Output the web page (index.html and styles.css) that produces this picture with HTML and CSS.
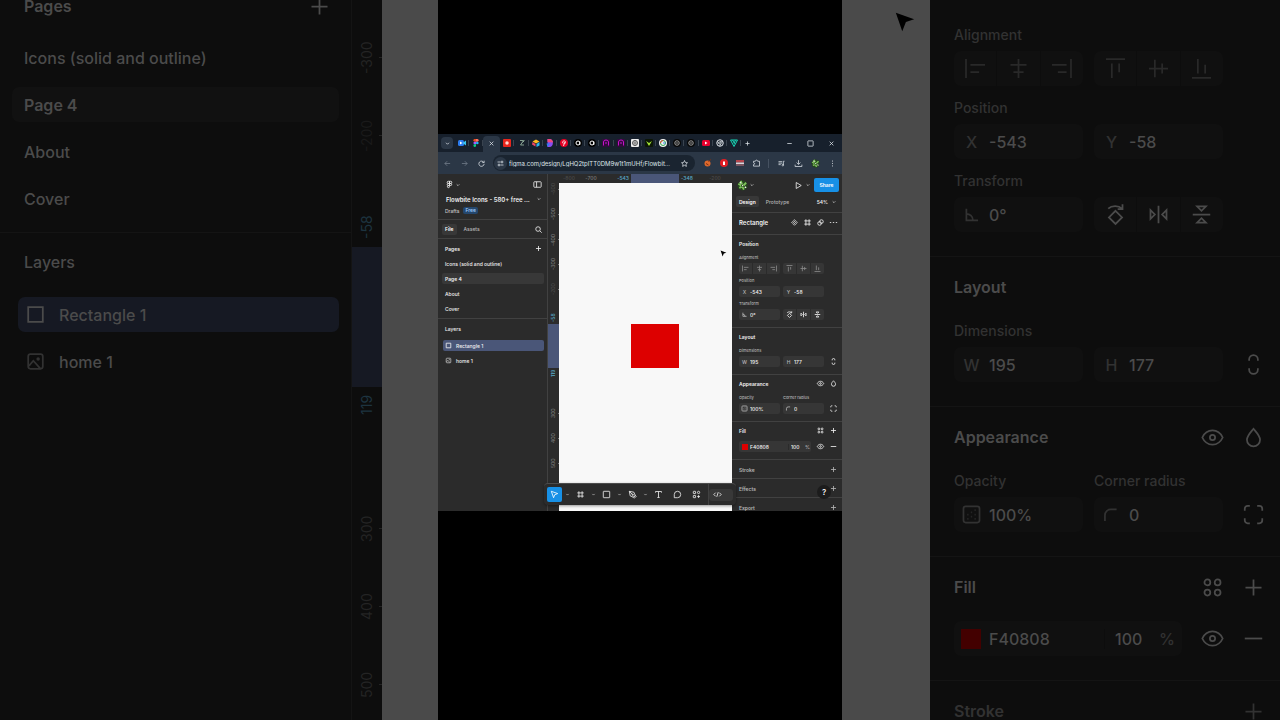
FILE: index.html
```
<!DOCTYPE html>
<html lang="en">
<head>
    <meta charset="UTF-8">
    <meta name="viewport" content="width=device-width, initial-scale=1.0">
    <title>Flowbite Icons</title>
    <link rel="stylesheet" href="styles.css">
</head>
<body>
    <!-- Icon set, 24 unit grid -->
    <svg class="sprite" aria-hidden="true">
        <symbol id="plus" viewBox="0 0 24 24"><path d="M12 6.500v11M6.500 12h11"/></symbol>
        <symbol id="minus" viewBox="0 0 24 24"><path d="M6 12h12"/></symbol>
        <symbol id="chevron" viewBox="0 0 24 24"><path d="M8 10l4 4 4-4"/></symbol>
        <symbol id="square" viewBox="0 0 24 24"><path d="M7 7h10v10H7z"/></symbol>
        <symbol id="image" viewBox="0 0 24 24"><rect x="7" y="7" width="10" height="10" rx="1.500"/><path d="M7.500 15l3-3.500 5 5.500"/><circle cx="13.800" cy="10.300" r=".6"/></symbol>
        <symbol id="al-left" viewBox="0 0 24 24"><path d="M5.500 5.500v13M8.500 9.500h10M8.500 14.500h6"/></symbol>
        <symbol id="al-hcenter" viewBox="0 0 24 24"><path d="M12 5.500v13M6.500 9.500h11M8.500 14.500h7"/></symbol>
        <symbol id="al-right" viewBox="0 0 24 24"><path d="M18.500 5.500v13M5.500 9.500h10M9.500 14.500h6"/></symbol>
        <symbol id="al-top" viewBox="0 0 24 24"><path d="M5.500 5.500h13M9.500 8.500v10M14.500 8.500v6"/></symbol>
        <symbol id="al-vcenter" viewBox="0 0 24 24"><path d="M5.500 12h13M9.500 6v12M14.500 8.500v7"/></symbol>
        <symbol id="al-bottom" viewBox="0 0 24 24"><path d="M5.500 18.500h13M9.500 5.500v10M14.500 9.500v6"/></symbol>
        <symbol id="angle" viewBox="0 0 24 24"><path d="M8.500 8v8h8M8.500 11.500a4.500 4.500 0 0 1 4.500 4.500"/></symbol>
        <symbol id="rotate" viewBox="0 0 24 24"><path d="M12 9.500l4.500 4.500-4.500 4.500L7.500 14zM7 8a6 4.500 0 0 1 9.500 0M16.800 5v3.300h-3.300"/></symbol>
        <symbol id="flip-h" viewBox="0 0 24 24"><path d="M12 6v12M6.500 9v6l3-3zM17.500 9v6l-3-3z"/></symbol>
        <symbol id="flip-v" viewBox="0 0 24 24"><path d="M6 12h12M9 6.500h6l-3 3zM9 17.500h6l-3-3z"/></symbol>
        <symbol id="link" viewBox="0 0 24 24"><path d="M9 9.500V8.500a3 3 0 0 1 6 0v1M9 14.500v1a3 3 0 0 0 6 0v-1"/></symbol>
        <symbol id="eye" viewBox="0 0 24 24"><path d="M5 12c3-6.500 11-6.500 14 0-3 6.500-11 6.500-14 0z"/><circle cx="12" cy="12" r="1.800"/></symbol>
        <symbol id="drop" viewBox="0 0 24 24"><path d="M12 6c2.500 3 4.500 5 4.500 7.500a4.500 4.500 0 0 1-9 0C7.500 11 9.500 9 12 6z"/></symbol>
        <symbol id="opacity" viewBox="0 0 24 24"><rect x="6.500" y="6.500" width="11" height="11" rx="1.500"/><path d="M14 9h1M14 12h1M14 15h1M11.500 10.500h1M11.500 13.500h1M9 12h1M9 15h1" opacity=".6"/></symbol>
        <symbol id="corner" viewBox="0 0 24 24"><path d="M7.500 16.500v-4a4 4 0 0 1 4-4h4"/></symbol>
        <symbol id="corners" viewBox="0 0 24 24"><path d="M6 9.500V8a2 2 0 0 1 2-2h1.500M14.500 6H16a2 2 0 0 1 2 2v1.500M18 14.500V16a2 2 0 0 1-2 2h-1.500M9.500 18H8a2 2 0 0 1-2-2v-1.500"/></symbol>
        <symbol id="styles" viewBox="0 0 24 24"><circle cx="8.500" cy="8.500" r="2"/><circle cx="15.500" cy="8.500" r="2"/><circle cx="8.500" cy="15.500" r="2"/><circle cx="15.500" cy="15.500" r="2"/></symbol>
        <symbol id="figma" viewBox="0 0 24 24"><path d="M12 5H9.300a2.300 2.300 0 0 0 0 4.700H12zM12 5h2.700a2.300 2.300 0 0 1 0 4.700H12zM12 9.700H9.300a2.300 2.300 0 0 0 0 4.600H12zM12 14.300H9.300A2.300 2.300 0 1 0 12 16.600z"/><circle cx="14.500" cy="12" r="2.300"/></symbol>
        <symbol id="sidebar" viewBox="0 0 24 24"><rect x="4" y="6" width="16" height="12" rx="1.500"/><path d="M10 6v12"/></symbol>
        <symbol id="search" viewBox="0 0 24 24"><circle cx="11" cy="11" r="5"/><path d="M15 15l4 4"/></symbol>
        <symbol id="play" viewBox="0 0 24 24"><path d="M7 5.500v13l11-6.500z"/></symbol>
        <symbol id="component" viewBox="0 0 24 24"><path d="M12 6l2 2-2 2-2-2zM12 14l2 2-2 2-2-2zM8 10l2 2-2 2-2-2zM16 10l2 2-2 2-2-2z"/></symbol>
        <symbol id="frame" viewBox="0 0 24 24"><path d="M8.500 5v14M15.500 5v14M5 8.500h14M5 15.500h14"/></symbol>
        <symbol id="mask" viewBox="0 0 24 24"><circle cx="10" cy="14" r="4"/><circle cx="14" cy="10" r="4"/></symbol>
        <symbol id="dots" viewBox="0 0 24 24"><path d="M4 12h3M10.500 12h3M17 12h3"/></symbol>
        <symbol id="kebab" viewBox="0 0 24 24"><path d="M12 4v3M12 10.500v3M12 17v3"/></symbol>
        <symbol id="pointer" viewBox="0 0 24 24"><path d="M5 5l5 14 2.500-6.500L19 10z"/></symbol>
        <symbol id="pen" viewBox="0 0 24 24"><path d="M5 5l10 2 3 7-4 4-7-3zM5 5l7 7M14 18l4-4 2 2-4 4z"/><circle cx="12.500" cy="12.500" r="1.500"/></symbol>
        <symbol id="text" viewBox="0 0 24 24"><path d="M5.500 8V5.500h13V8M12 5.500v13M9.500 18.500h5"/></symbol>
        <symbol id="comment" viewBox="0 0 24 24"><path d="M5 19v-7a7 7 0 1 1 7 7z"/></symbol>
        <symbol id="actions" viewBox="0 0 24 24"><rect x="5" y="5" width="5" height="5" rx="1"/><circle cx="16.500" cy="7.500" r="2.500"/><rect x="5" y="14" width="5" height="5" rx="1"/><path d="M16.500 13.500v6M13.500 16.500h6"/></symbol>
        <symbol id="code" viewBox="0 0 24 24"><path d="M8 8l-4 4 4 4M16 8l4 4-4 4M13.500 7l-3 10"/></symbol>
        <symbol id="close" viewBox="0 0 24 24"><path d="M7 7l10 10M17 7L7 17"/></symbol>
        <symbol id="maximize" viewBox="0 0 24 24"><rect x="5" y="5" width="14" height="14" rx="1"/></symbol>
        <symbol id="back" viewBox="0 0 24 24"><path d="M19 12H5M11 6l-6 6 6 6"/></symbol>
        <symbol id="forward" viewBox="0 0 24 24"><path d="M5 12h14M13 6l6 6-6 6"/></symbol>
        <symbol id="reload" viewBox="0 0 24 24"><path d="M18 9a7 7 0 1 0 1 4M19 4.500V9.500h-5"/></symbol>
        <symbol id="tune" viewBox="0 0 24 24"><path d="M4 8h8M12 16h8"/><circle cx="16" cy="8" r="2.500"/><circle cx="8" cy="16" r="2.500"/></symbol>
        <symbol id="star" viewBox="0 0 24 24"><path d="M12 4l2.400 5.400 5.600.6-4.200 3.900 1.200 5.800L12 16.800l-5 2.900 1.200-5.800L4 10l5.600-.6z"/></symbol>
        <symbol id="puzzle" viewBox="0 0 24 24"><path d="M4 6h5c0-4 6-4 6 0h5v13H4v-4c4 0 4-5 0-5z"/></symbol>
        <symbol id="playlist" viewBox="0 0 24 24"><path d="M4 7h10M4 11h10M4 15h6M17 16V6h3"/><circle cx="15.500" cy="16.500" r="2"/></symbol>
        <symbol id="download" viewBox="0 0 24 24"><path d="M12 3v11M7 9.500l5 5 5-5M3 15v5h18v-5"/></symbol>
        <symbol id="cursor" viewBox="0 0 24 24"><path d="M2 2l7 20 4-10 9-3z"/></symbol>
        <symbol id="avatar" viewBox="0 0 24 24">
            <circle cx="12" cy="12" r="11" fill="#26451f" stroke="none"/>
            <path d="M3 8l6 4M8 2l3 7M14 12l6-6M12 15l3 6M5 17l5-2" stroke="#7fc45c" stroke-width="4"/>
            <path d="M6 5l3 2M17 15l3 2M11 12h2" stroke="#eef5e6" stroke-width="3"/>
        </symbol>
    </svg>

    <div class="stage">
        <!-- Dimmed close-up, left half -->
        <section class="backdrop backdrop-left" aria-label="Layers close-up">
            <aside class="panel side-panel">
                <div class="row-title pages-title"><h2>Pages</h2><button class="icon-btn" aria-label="Add page"><svg class="icon"><use href="#plus"/></svg></button></div>
                <nav class="page-list">
                    <a href="#">Icons (solid and outline)</a>
                    <a href="#" class="current">Page 4</a>
                    <a href="#">About</a>
                    <a href="#">Cover</a>
                </nav>
                <div class="layers">
                    <h2>Layers</h2>
                    <a href="#" class="layer selected"><svg class="icon"><use href="#square"/></svg>Rectangle 1</a>
                    <a href="#" class="layer"><svg class="icon"><use href="#image"/></svg>home 1</a>
                </div>
            </aside>
            <div class="ruler-y">
                <span class="tick">-300</span>
                <span class="tick faint">-200</span>
                <span class="edge edge-start">-58</span>
                <span class="range"></span>
                <span class="edge edge-end">119</span>
                <span class="tick">300</span>
                <span class="tick">400</span>
                <span class="tick">500</span>
            </div>
            <div class="dim-canvas"></div>
        </section>

        <!-- Recorded window -->
        <main class="clip">
            <div class="browser">
                <div class="tabs">
                    <button class="tab-menu" aria-label="Search tabs"><svg class="icon"><use href="#chevron"/></svg></button>
                    <div class="tab-list">
                        <span><svg class="fav" viewBox="0 0 16 16"><rect y="2" width="12" height="12" rx="3" fill="#2b7cf0"/><path d="M9 8l7-5v10z" fill="#39c6ef"/><path d="M4 5l5 3-5 3z" fill="#fff"/></svg></span>
                        <span><svg class="fav" viewBox="0 0 16 16"><path d="M8 0H5.500a2.600 2.600 0 0 0 0 5.300H8z" fill="#f24e1e"/><path d="M8 0h2.500a2.600 2.600 0 0 1 0 5.300H8z" fill="#ff7262"/><path d="M8 5.300H5.500a2.600 2.600 0 0 0 0 5.300H8z" fill="#a259ff"/><circle cx="10.600" cy="8" r="2.600" fill="#1abcfe"/><path d="M8 10.700H5.500A2.600 2.600 0 1 0 8 13.300z" fill="#0acf83"/></svg></span>
                        <span class="active"><svg class="icon"><use href="#close"/></svg></span>
                        <span><svg class="fav" viewBox="0 0 16 16"><rect width="16" height="16" rx="2" fill="#e8261d"/><circle cx="8" cy="8" r="3.500" fill="#ffd8d2"/></svg></span>
                        <span><svg class="fav" viewBox="0 0 16 16"><path d="M4 3h7L5 12h7M9 7l4-4" fill="none" stroke="#a8c8b0" stroke-width="1.500"/></svg></span>
                        <span><svg class="fav" viewBox="0 0 16 16"><path d="M1 5l7-4 7 4-7 4z" fill="#ffb91f"/><path d="M1 6l6 4v5L0 11z" fill="#f04668"/><path d="M9 10l6-4v7l-6 3z" fill="#2bb9ef"/></svg></span>
                        <span><svg class="fav" viewBox="0 0 16 16"><path d="M3 0h4c9 0 9 16 0 16H3z" fill="#8a4cf0"/><path d="M3 0h4c5 0 7 4 7 7L3 6z" fill="#f0487f"/><path d="M1 9h7l-5 7z" fill="#2f80ed"/></svg></span>
                        <span><svg class="fav" viewBox="0 0 16 16"><circle cx="8" cy="8" r="8" fill="#e60023"/><path d="M7 14l2-8M5.500 8.500C3 3 12 2 11 7c-.5 3-3 3-3 1.500" fill="none" stroke="#fff" stroke-width="1.600"/></svg></span>
                        <span><svg class="fav" viewBox="0 0 16 16"><circle cx="8" cy="8" r="8" fill="#000"/><circle cx="8" cy="8" r="4" fill="none" stroke="#fff" stroke-width="2"/><path d="M11.500 5v7" stroke="#fff" stroke-width="2"/></svg></span>
                        <span><svg class="fav" viewBox="0 0 16 16"><circle cx="8" cy="8" r="8" fill="#000"/><circle cx="8" cy="8" r="4" fill="none" stroke="#fff" stroke-width="2"/><path d="M11.500 5v7" stroke="#fff" stroke-width="2"/></svg></span>
                        <span><svg class="fav" viewBox="0 0 16 16"><rect width="16" height="16" fill="#310b3c"/><path d="M3 13V6a5 4 0 0 1 10 0v7M6 8h4" fill="none" stroke="#c414c9" stroke-width="2"/></svg></span>
                        <span><svg class="fav" viewBox="0 0 16 16"><rect width="16" height="16" fill="#310b3c"/><path d="M3 13V6a5 4 0 0 1 10 0v7M6 8h4" fill="none" stroke="#c414c9" stroke-width="2"/></svg></span>
                        <span><svg class="fav" viewBox="0 0 16 16"><rect width="16" height="16" rx="2" fill="#eee"/><circle cx="8" cy="8" r="5" fill="none" stroke="#222" stroke-width="1.500"/><path d="M8 3v10M4 8h8" stroke="#222"/></svg></span>
                        <span><svg class="fav" viewBox="0 0 16 16"><rect width="16" height="16" rx="2" fill="#0c1606"/><path d="M2 4l6 10 6-10-6 4z" fill="#a5e635"/></svg></span>
                        <span><svg class="fav" viewBox="0 0 16 16"><circle cx="8" cy="8" r="8" fill="#f3f3f3"/><circle cx="8" cy="8" r="5" fill="none" stroke="#34a853" stroke-width="2"/><path d="M3 8a5 5 0 0 1 5-5" fill="none" stroke="#ea4335" stroke-width="2"/><path d="M8 8h5" stroke="#4285f4" stroke-width="2"/></svg></span>
                        <span><svg class="fav" viewBox="0 0 16 16"><circle cx="8" cy="8" r="8" fill="#080808"/><circle cx="8" cy="8" r="4.500" fill="none" stroke="#999" stroke-width="2"/><path d="M5 6l6 4M5 10l6-4" stroke="#999"/></svg></span>
                        <span><svg class="fav" viewBox="0 0 16 16"><circle cx="8" cy="8" r="8" fill="#080808"/><circle cx="8" cy="8" r="4.500" fill="none" stroke="#999" stroke-width="2"/><path d="M5 6l6 4M5 10l6-4" stroke="#999"/></svg></span>
                        <span><svg class="fav" viewBox="0 0 16 16"><rect y="2" width="16" height="12" rx="3" fill="#e8002d"/><path d="M6 5l5 3-5 3z" fill="#fff"/></svg></span>
                        <span><svg class="fav" viewBox="0 0 16 16"><circle cx="8" cy="8" r="6.500" fill="#17202c" stroke="#dfe4ea" stroke-width="2"/><circle cx="8" cy="8" r="2.500" fill="none" stroke="#dfe4ea" stroke-width="1.500"/><path d="M8 5.500h6M6 9.500l-3-5M10 9.500l-3 5" stroke="#dfe4ea" stroke-width="1.500"/></svg></span>
                        <span><svg class="fav" viewBox="0 0 16 16"><path d="M1 2h14L8 15zM5 2l4 7M11 2L8 9" fill="none" stroke="#18d4b5" stroke-width="2"/></svg></span>
                    </div>
                    <button class="icon-btn" aria-label="New tab"><svg class="icon"><use href="#plus"/></svg></button>
                    <div class="window-controls">
                        <button class="icon-btn" aria-label="Minimize"><svg class="icon"><use href="#minus"/></svg></button>
                        <button class="icon-btn" aria-label="Maximize"><svg class="icon"><use href="#maximize"/></svg></button>
                        <button class="icon-btn" aria-label="Close"><svg class="icon"><use href="#close"/></svg></button>
                    </div>
                </div>
                <div class="address-bar">
                    <div class="nav-buttons">
                        <button class="icon-btn off" aria-label="Back"><svg class="icon"><use href="#back"/></svg></button>
                        <button class="icon-btn off" aria-label="Forward"><svg class="icon"><use href="#forward"/></svg></button>
                        <button class="icon-btn" aria-label="Reload"><svg class="icon"><use href="#reload"/></svg></button>
                    </div>
                    <div class="url">
                        <span class="site-info"><svg class="icon"><use href="#tune"/></svg></span>
                        <input type="text" aria-label="Address" value="figma.com/design/LgHQ2tpITT0DM9w1t1mUHf/Flowbit...">
                        <svg class="icon"><use href="#star"/></svg>
                    </div>
                    <div class="extensions">
                        <svg class="fav" viewBox="0 0 16 16"><circle cx="7" cy="9" r="6" fill="#e0692b"/><path d="M9 5l5-4M4 9l5 3" stroke="#7b2f12" stroke-width="2"/></svg>
                        <svg class="fav" viewBox="0 0 16 16"><circle cx="8" cy="8" r="8" fill="#e01e24"/><path d="M6 12V5h4v7z" fill="#fff"/></svg>
                        <svg class="fav" viewBox="0 0 16 16"><path d="M0 2h16v5H0z" fill="#b4434b"/><path d="M0 7h16v3H0z" fill="#d8d9dd"/><path d="M0 10h16v4H0z" fill="#77545f"/></svg>
                        <svg class="icon"><use href="#puzzle"/></svg>
                    </div>
                    <div class="browser-tools">
                        <svg class="icon"><use href="#playlist"/></svg>
                        <svg class="icon"><use href="#download"/></svg>
                        <svg class="icon"><use href="#avatar"/></svg>
                        <svg class="icon"><use href="#kebab"/></svg>
                    </div>
                </div>
            </div>

            <div class="editor">
                <aside class="panel side-panel">
                    <header class="file-head">
                        <div class="file-menu">
                            <span class="menu"><svg class="icon"><use href="#figma"/></svg><svg class="icon caret"><use href="#chevron"/></svg></span>
                            <svg class="icon"><use href="#sidebar"/></svg>
                        </div>
                        <div class="file-name"><h1>Flowbite Icons - 580+ free ...</h1><svg class="icon caret"><use href="#chevron"/></svg></div>
                        <div class="file-meta">Drafts <span class="badge">Free</span></div>
                    </header>
                    <div class="side-tabs">
                        <button class="tab on">File</button>
                        <button class="tab">Assets</button>
                        <svg class="icon"><use href="#search"/></svg>
                    </div>
                    <div class="row-title pages-title"><h2>Pages</h2><button class="icon-btn" aria-label="Add page"><svg class="icon"><use href="#plus"/></svg></button></div>
                    <nav class="page-list">
                        <a href="#">Icons (solid and outline)</a>
                        <a href="#" class="current">Page 4</a>
                        <a href="#">About</a>
                        <a href="#">Cover</a>
                    </nav>
                    <div class="layers">
                        <h2>Layers</h2>
                        <a href="#" class="layer selected"><svg class="icon"><use href="#square"/></svg>Rectangle 1</a>
                        <a href="#" class="layer"><svg class="icon"><use href="#image"/></svg>home 1</a>
                    </div>
                </aside>

                <div class="ruler-y">
                    <span class="tick faint">-600</span>
                    <span class="tick">-500</span>
                    <span class="tick">-400</span>
                    <span class="tick">-300</span>
                    <span class="tick faint">-200</span>
                    <span class="edge edge-start">-58</span>
                    <span class="range"></span>
                    <span class="edge edge-end">119</span>
                    <span class="tick">300</span>
                    <span class="tick">400</span>
                    <span class="tick">500</span>
                </div>

                <div class="workspace">
                    <div class="ruler-x">
                        <span class="first faint">-800</span>
                        <span>-700</span>
                        <span class="edge edge-start">-543</span>
                        <span class="range"></span>
                        <span class="edge edge-end">-348</span>
                        <span class="faint">-200</span>
                    </div>
                    <div class="canvas">
                        <div class="shape"></div>
                        <svg class="cursor"><use href="#cursor"/></svg>
                    </div>
                </div>

                <aside class="panel props">
                    <div class="share-row">
                        <span class="menu"><svg class="icon"><use href="#avatar"/></svg><svg class="icon caret"><use href="#chevron"/></svg></span>
                        <span class="menu"><svg class="icon"><use href="#play"/></svg><svg class="icon caret"><use href="#chevron"/></svg></span>
                        <button class="share">Share</button>
                    </div>
                    <div class="mode-tabs">
                        <button class="tab on">Design</button>
                        <button class="tab">Prototype</button>
                        <span class="zoom">54%<svg class="icon caret"><use href="#chevron"/></svg></span>
                    </div>
                    <div class="selection">
                        <h2>Rectangle</h2>
                        <svg class="icon"><use href="#component"/></svg>
                        <svg class="icon"><use href="#frame"/></svg>
                        <svg class="icon"><use href="#mask"/></svg>
                        <svg class="icon"><use href="#dots"/></svg>
                    </div>
                    <section class="group">
                        <div class="row-title"><h2>Position</h2></div>
                        <div class="labels"><span>Alignment</span></div>
                        <div class="fields">
                            <div class="segment quiet">
                                <button aria-label="Align left"><svg class="icon"><use href="#al-left"/></svg></button>
                                <button aria-label="Align center"><svg class="icon"><use href="#al-hcenter"/></svg></button>
                                <button aria-label="Align right"><svg class="icon"><use href="#al-right"/></svg></button>
                            </div>
                            <div class="segment quiet">
                                <button aria-label="Align top"><svg class="icon"><use href="#al-top"/></svg></button>
                                <button aria-label="Align middle"><svg class="icon"><use href="#al-vcenter"/></svg></button>
                                <button aria-label="Align bottom"><svg class="icon"><use href="#al-bottom"/></svg></button>
                            </div>
                        </div>
                        <div class="labels"><span>Position</span></div>
                        <div class="fields">
                            <label class="field"><span>X</span><input type="text" value="-543"></label>
                            <label class="field"><span>Y</span><input type="text" value="-58"></label>
                        </div>
                        <div class="labels"><span>Transform</span></div>
                        <div class="fields">
                            <label class="field"><span><svg class="icon"><use href="#angle"/></svg></span><input type="text" aria-label="Rotation" value="0°"></label>
                            <div class="segment">
                                <button aria-label="Rotate"><svg class="icon"><use href="#rotate"/></svg></button>
                                <button aria-label="Flip horizontal"><svg class="icon"><use href="#flip-h"/></svg></button>
                                <button aria-label="Flip vertical"><svg class="icon"><use href="#flip-v"/></svg></button>
                            </div>
                        </div>
                    </section>
                    <section class="group">
                        <div class="row-title"><h2>Layout</h2></div>
                        <div class="labels"><span>Dimensions</span></div>
                        <div class="fields">
                            <label class="field"><span>W</span><input type="text" value="195"></label>
                            <label class="field"><span>H</span><input type="text" value="177"></label>
                            <button class="icon-btn" aria-label="Lock ratio"><svg class="icon"><use href="#link"/></svg></button>
                        </div>
                    </section>
                    <section class="group">
                        <div class="row-title"><h2>Appearance</h2><button class="icon-btn" aria-label="Visibility"><svg class="icon"><use href="#eye"/></svg></button><button class="icon-btn" aria-label="Blend mode"><svg class="icon"><use href="#drop"/></svg></button></div>
                        <div class="labels"><span>Opacity</span><span>Corner radius</span></div>
                        <div class="fields">
                            <label class="field"><span><svg class="icon"><use href="#opacity"/></svg></span><input type="text" aria-label="Opacity" value="100%"></label>
                            <label class="field"><span><svg class="icon"><use href="#corner"/></svg></span><input type="text" aria-label="Corner radius" value="0"></label>
                            <button class="icon-btn" aria-label="Individual corners"><svg class="icon"><use href="#corners"/></svg></button>
                        </div>
                    </section>
                    <section class="group">
                        <div class="row-title"><h2>Fill</h2><button class="icon-btn" aria-label="Styles"><svg class="icon"><use href="#styles"/></svg></button><button class="icon-btn" aria-label="Add fill"><svg class="icon"><use href="#plus"/></svg></button></div>
                        <div class="fields fill-row">
                            <div class="paint">
                                <span class="swatch"></span>
                                <input type="text" class="hex" aria-label="Fill colour" value="F40808">
                                <input type="text" class="alpha" aria-label="Fill opacity" value="100">
                                <span class="unit">%</span>
                            </div>
                            <button class="icon-btn" aria-label="Toggle fill"><svg class="icon"><use href="#eye"/></svg></button>
                            <button class="icon-btn" aria-label="Remove fill"><svg class="icon"><use href="#minus"/></svg></button>
                        </div>
                    </section>
                    <section class="group closed"><div class="row-title"><h2>Stroke</h2><button class="icon-btn" aria-label="Add stroke"><svg class="icon"><use href="#plus"/></svg></button></div></section>
                    <section class="group closed"><div class="row-title"><h2>Effects</h2><button class="icon-btn" aria-label="Add effect"><svg class="icon"><use href="#plus"/></svg></button></div></section>
                    <section class="group closed"><div class="row-title"><h2>Export</h2><button class="icon-btn" aria-label="Add export"><svg class="icon"><use href="#plus"/></svg></button></div></section>
                </aside>

                <div class="toolbar">
                    <button class="tool on" aria-label="Move"><svg class="icon"><use href="#pointer"/></svg></button><svg class="icon caret"><use href="#chevron"/></svg>
                    <button class="tool" aria-label="Frame"><svg class="icon"><use href="#frame"/></svg></button><svg class="icon caret"><use href="#chevron"/></svg>
                    <button class="tool" aria-label="Rectangle"><svg class="icon"><use href="#maximize"/></svg></button><svg class="icon caret"><use href="#chevron"/></svg>
                    <button class="tool" aria-label="Pen"><svg class="icon"><use href="#pen"/></svg></button><svg class="icon caret"><use href="#chevron"/></svg>
                    <button class="tool" aria-label="Text"><svg class="icon"><use href="#text"/></svg></button>
                    <button class="tool" aria-label="Comment"><svg class="icon"><use href="#comment"/></svg></button>
                    <button class="tool" aria-label="Actions"><svg class="icon"><use href="#actions"/></svg></button>
                    <span class="divider"></span>
                    <button class="dev-mode" aria-label="Dev mode"><svg class="icon"><use href="#code"/></svg></button>
                </div>
                <button class="help">?</button>
            </div>
        </main>

        <!-- Dimmed close-up, right half -->
        <section class="backdrop backdrop-right" aria-label="Properties close-up">
            <div class="dim-canvas"><svg class="cursor"><use href="#cursor"/></svg></div>
            <aside class="panel props">
                <section class="group">
                    <div class="labels"><span>Alignment</span></div>
                    <div class="fields">
                        <div class="segment quiet">
                            <button aria-label="Align left"><svg class="icon"><use href="#al-left"/></svg></button>
                            <button aria-label="Align center"><svg class="icon"><use href="#al-hcenter"/></svg></button>
                            <button aria-label="Align right"><svg class="icon"><use href="#al-right"/></svg></button>
                        </div>
                        <div class="segment quiet">
                            <button aria-label="Align top"><svg class="icon"><use href="#al-top"/></svg></button>
                            <button aria-label="Align middle"><svg class="icon"><use href="#al-vcenter"/></svg></button>
                            <button aria-label="Align bottom"><svg class="icon"><use href="#al-bottom"/></svg></button>
                        </div>
                    </div>
                    <div class="labels"><span>Position</span></div>
                    <div class="fields">
                        <label class="field"><span>X</span><input type="text" value="-543"></label>
                        <label class="field"><span>Y</span><input type="text" value="-58"></label>
                    </div>
                    <div class="labels"><span>Transform</span></div>
                    <div class="fields">
                        <label class="field"><span><svg class="icon"><use href="#angle"/></svg></span><input type="text" aria-label="Rotation" value="0°"></label>
                        <div class="segment">
                            <button aria-label="Rotate"><svg class="icon"><use href="#rotate"/></svg></button>
                            <button aria-label="Flip horizontal"><svg class="icon"><use href="#flip-h"/></svg></button>
                            <button aria-label="Flip vertical"><svg class="icon"><use href="#flip-v"/></svg></button>
                        </div>
                    </div>
                </section>
                <section class="group">
                    <div class="row-title"><h2>Layout</h2></div>
                    <div class="labels"><span>Dimensions</span></div>
                    <div class="fields">
                        <label class="field"><span>W</span><input type="text" value="195"></label>
                        <label class="field"><span>H</span><input type="text" value="177"></label>
                        <button class="icon-btn" aria-label="Lock ratio"><svg class="icon"><use href="#link"/></svg></button>
                    </div>
                </section>
                <section class="group">
                    <div class="row-title"><h2>Appearance</h2><button class="icon-btn" aria-label="Visibility"><svg class="icon"><use href="#eye"/></svg></button><button class="icon-btn" aria-label="Blend mode"><svg class="icon"><use href="#drop"/></svg></button></div>
                    <div class="labels"><span>Opacity</span><span>Corner radius</span></div>
                    <div class="fields">
                        <label class="field"><span><svg class="icon"><use href="#opacity"/></svg></span><input type="text" aria-label="Opacity" value="100%"></label>
                        <label class="field"><span><svg class="icon"><use href="#corner"/></svg></span><input type="text" aria-label="Corner radius" value="0"></label>
                        <button class="icon-btn" aria-label="Individual corners"><svg class="icon"><use href="#corners"/></svg></button>
                    </div>
                </section>
                <section class="group">
                    <div class="row-title"><h2>Fill</h2><button class="icon-btn" aria-label="Styles"><svg class="icon"><use href="#styles"/></svg></button><button class="icon-btn" aria-label="Add fill"><svg class="icon"><use href="#plus"/></svg></button></div>
                    <div class="fields fill-row">
                        <div class="paint">
                            <span class="swatch"></span>
                            <input type="text" class="hex" aria-label="Fill colour" value="F40808">
                            <input type="text" class="alpha" aria-label="Fill opacity" value="100">
                            <span class="unit">%</span>
                        </div>
                        <button class="icon-btn" aria-label="Toggle fill"><svg class="icon"><use href="#eye"/></svg></button>
                        <button class="icon-btn" aria-label="Remove fill"><svg class="icon"><use href="#minus"/></svg></button>
                    </div>
                </section>
                <section class="group closed"><div class="row-title"><h2>Stroke</h2><button class="icon-btn" aria-label="Add stroke"><svg class="icon"><use href="#plus"/></svg></button></div></section>
            </aside>
        </section>
    </div>
</body>
</html>
```
FILE: styles.css
```
* {
    box-sizing: border-box;
}
body {
    margin: 0;
    background: #000;
    font-family: Inter, "Liberation Sans", sans-serif;
    overflow: hidden;
}
h1, h2 {
    margin: 0;
    font-size: inherit;
    font-weight: 600;
}
a {
    color: inherit;
    text-decoration: none;
}
button, input {
    margin: 0;
    padding: 0;
    border: 0;
    background: none;
    color: inherit;
    font: inherit;
}
.sprite {
    display: block;
    width: 0;
    height: 0;
}
.stage {
    display: grid;
    grid-template-columns: 1fr 404px 1fr;
    height: 100vh;
}

/* sizes and colours of the recorded window */
.clip {
    --font: 5px;
    --small: 4px;
    --ruler-font: 5px;
    --icon: 11px;
    --stroke: 1.800;
    --pad: 7px;
    --pad-end: 3px;
    --row: 11px;
    --list-gap: 4px;
    --heading: 16px;
    --title-top: 1px;
    --label: 12px;
    --label-top: 1px;
    --bottom: 7px;
    --field: 41px;
    --paint: 72px;
    --gap: 3px;
    --radius: 2px;
    --swatch: 6px;
    --unit: 9px;
    --fill-top: 3px;
    --icon-gap: 2px;
    --tick: 25px;
    --before: 22px;
    --range: 44px;
    --after: 33px;
    --edge-gap: 2px;
    --ruler: 11px;
    --bg: #2b2b2b;
    --line: #414141;
    --box: #363636;
    --on: #383838;
    --text: #f0f0f0;
    --muted: #b5b5b5;
    --quiet: #8a8a8a;
    --tick-color: #7a7a7a;
    --faint: #4a4a4a;
    --edge: #58a9c8;
    --select: #4a5678;
    --red: #dd0000;
    font-weight: 500;
}
/* same panels, enlarged and darkened */
.backdrop {
    --font: 16px;
    --small: 14px;
    --ruler-font: 14px;
    --icon: 35px;
    --stroke: 1.200;
    --pad: 24px;
    --pad-end: 9px;
    --row: 35px;
    --list-gap: 12px;
    --heading: 52px;
    --title-top: 8px;
    --label: 38px;
    --label-top: 4px;
    --bottom: 24px;
    --field: 129px;
    --paint: 228px;
    --gap: 11px;
    --radius: 7px;
    --swatch: 20px;
    --unit: 34px;
    --fill-top: 12px;
    --icon-gap: 6px;
    --tick: 78px;
    --before: 72px;
    --range: 140px;
    --after: 103px;
    --edge-gap: 8px;
    --ruler: 30px;
    --bg: #0d0d0d;
    --line: #141414;
    --box: #101010;
    --on: #111;
    --text: #4b4b4b;
    --muted: #323232;
    --quiet: #292929;
    --tick-color: #242424;
    --faint: #1a1a1a;
    --edge: #1d3440;
    --select: #161923;
    --red: #430000;
    display: flex;
    height: 100vh;
    min-width: 0;
    overflow: hidden;
}
.dim-canvas {
    flex: 1;
    position: relative;
    background: #4a4a4a;
}

/* shared pieces */
.icon {
    flex: none;
    width: var(--icon);
    height: var(--icon);
    fill: none;
    stroke: currentColor;
    stroke-width: var(--stroke);
    display: block;
}
.icon-btn {
    flex: none;
    width: var(--icon);
    height: var(--icon);
}
.panel {
    background: var(--bg);
    color: var(--text);
    font-size: var(--font);
    overflow: hidden;
    white-space: nowrap;
}
.row-title {
    display: flex;
    align-items: center;
    gap: var(--icon-gap);
    height: var(--heading);
    padding: var(--title-top) var(--pad-end) 0 var(--pad);
}
.row-title h2 {
    flex: 1;
}

/* left panel */
.side-panel {
    border-right: 1px solid var(--line);
}
.page-list {
    display: flex;
    flex-direction: column;
    gap: var(--list-gap);
}
.page-list a, .layer {
    display: flex;
    align-items: center;
    height: var(--row);
    border-radius: var(--radius);
}
.page-list .current {
    background: var(--on);
    font-weight: 600;
}
.layer.selected {
    background: var(--select);
}
.layers {
    border-top: 1px solid var(--line);
}
.layers h2 {
    display: flex;
    align-items: center;
}
.layer + .layer {
    margin-top: var(--list-gap);
}
.layer + .layer .icon {
    color: var(--muted);
}
.backdrop .side-panel {
    width: 352px;
    font-weight: 500;
}
.backdrop .pages-title {
    height: 40px;
    margin-top: -16px;
    padding: 4px 14px 0 24px;
}
.backdrop .page-list {
    padding: 16px 12px;
}
.backdrop .page-list a {
    padding-left: 12px;
}
.backdrop .layers {
    padding: 0 12px 0 18px;
}
.backdrop .layers h2 {
    height: 64px;
    padding: 0 0 6px 6px;
    font-weight: 500;
}
.backdrop .layer {
    gap: 6px;
}

/* rulers */
.ruler-y {
    flex: none;
    display: flex;
    flex-direction: column;
    width: var(--ruler);
    background: var(--bg);
    color: var(--tick-color);
    font-size: var(--ruler-font);
    overflow: hidden;
}
.ruler-y span {
    flex: none;
    display: flex;
    align-items: center;
    justify-content: center;
    line-height: 1;
    writing-mode: vertical-rl;
    transform: rotate(180deg);
}
.ruler-y .tick {
    height: var(--tick);
    background: linear-gradient(var(--tick-color), var(--tick-color)) left center / 10% 1px no-repeat;
}
.ruler-y .faint, .ruler-x .faint {
    color: var(--faint);
}
.edge {
    color: var(--edge);
}
.range {
    background: var(--select);
}
.ruler-y .edge-start {
    height: var(--before);
    justify-content: flex-start;
    padding-top: var(--edge-gap);
}
.ruler-y .range {
    height: var(--range);
}
.ruler-y .edge-end {
    height: var(--after);
    justify-content: flex-end;
    padding-bottom: var(--edge-gap);
}
.backdrop .ruler-y {
    padding-top: 19px;
}
.clip .ruler-y {
    padding-top: 3px;
}

/* right panel */
.backdrop .props {
    width: 350px;
    padding-top: 13px;
    font-weight: 500;
}
.group {
    border-top: 1px solid var(--line);
    padding-bottom: var(--bottom);
}
.backdrop .group:first-child {
    border-top: 0;
}
.group.closed {
    padding-bottom: 0;
    color: var(--muted);
}
.clip .closed .row-title {
    height: 18px;
}
.labels {
    display: flex;
    align-items: center;
    gap: var(--gap);
    height: var(--label);
    padding: var(--label-top) 0 0 var(--pad);
    color: var(--muted);
    font-size: var(--small);
}
.labels span {
    width: var(--field);
}
.fields {
    display: flex;
    align-items: center;
    gap: var(--gap);
    height: var(--row);
    padding: 0 var(--pad-end) 0 var(--pad);
}
.fields > .icon-btn {
    margin-left: auto;
}
.field, .segment, .paint {
    display: flex;
    align-items: center;
    width: var(--field);
    height: var(--row);
    background: var(--box);
    border-radius: var(--radius);
}
.field span {
    flex: none;
    display: flex;
    justify-content: center;
    width: var(--icon);
    color: var(--muted);
}
.field input {
    width: 100%;
    min-width: 0;
}
.segment {
    gap: 1px;
    background: none;
    overflow: hidden;
}
.segment button {
    flex: 1;
    display: flex;
    justify-content: center;
    background: var(--box);
}
.segment.quiet {
    color: var(--quiet);
}
.fill-row {
    margin-top: var(--fill-top);
    gap: var(--icon-gap);
}
.fields .paint {
    width: var(--paint);
}
.fill-row > .icon-btn + .icon-btn {
    margin-left: 0;
}
.swatch {
    flex: none;
    width: var(--swatch);
    height: var(--swatch);
    background: var(--red);
}
.clip .swatch {
    margin: 0 2px 0 3px;
}
.backdrop .swatch {
    margin: 0 8px 0 7px;
}
.hex {
    flex: 1;
    min-width: 0;
}
.alpha {
    flex: none;
    border-left: 1px solid var(--bg);
}
.unit {
    flex: none;
    width: var(--unit);
    padding-left: var(--gap);
    color: var(--muted);
}
.clip .alpha {
    width: 14px;
    padding-left: 2px;
}
.backdrop .alpha {
    width: 44px;
    padding-left: 10px;
}

/* recorded window */
.clip {
    align-self: start;
    margin-top: 134px;
    overflow: hidden;
}
.browser {
    --icon: 9px;
    --stroke: 2;
    color: #dfe4ea;
}
.fav {
    flex: none;
    width: 8px;
    height: 8px;
}
.tabs {
    display: flex;
    align-items: center;
    height: 18px;
    padding: 0 3px;
    background: #17202c;
}
.tab-menu {
    display: flex;
    align-items: center;
    justify-content: center;
    width: 12px;
    height: 12px;
    border-radius: 4px;
    background: #2b3746;
}
.tab-list {
    display: flex;
    align-self: stretch;
    width: 286px;
    margin: 0 2px;
}
.tab-list span {
    flex: 1;
    display: flex;
    align-items: center;
    justify-content: center;
    background: linear-gradient(#39434f, #39434f) right center / 1px 6px no-repeat;
}
.tab-list .active {
    flex: 0 0 17px;
    margin-top: 2px;
    padding-bottom: 2px;
    border-radius: 4px 4px 0 0;
    background: #2b3746;
}
.window-controls {
    display: flex;
    gap: 12px;
    margin-left: auto;
    padding-right: 3px;
}
.address-bar {
    display: flex;
    align-items: center;
    height: 22px;
    padding: 0 5px;
    background: #2b3746;
}
.nav-buttons, .extensions, .browser-tools {
    display: flex;
    align-items: center;
    gap: 8px;
}
.off {
    color: #76808d;
}
.url {
    flex: 1;
    display: flex;
    align-items: center;
    gap: 2px;
    height: 16px;
    margin: 0 9px 0 7px;
    padding: 0 6px 0 1px;
    border-radius: 8px;
    background: #1a2430;
    font-size: 6px;
    font-weight: 400;
}
.url input {
    flex: 1;
    min-width: 0;
}
.site-info {
    padding: 2px;
    border-radius: 50%;
    background: #2b3746;
}
.extensions {
    padding-right: 7px;
    border-right: 1px solid #465261;
}
.browser-tools {
    padding-left: 8px;
}
.editor {
    position: relative;
    display: grid;
    grid-template-columns: 110px 11px 1fr 110px;
    height: 337px;
    background: var(--bg);
}
.menu {
    display: flex;
    align-items: center;
}
.icon.caret {
    width: 8px;
    height: 8px;
}
.file-head {
    height: 46px;
    padding: 5px 4px 0 6px;
    border-bottom: 1px solid var(--line);
}
.file-menu, .file-name {
    display: flex;
    align-items: center;
    justify-content: space-between;
}
.file-menu .icon.caret {
    margin-left: -1px;
}
.file-name {
    height: 18px;
    padding-left: 2px;
    font-size: 6px;
}
.file-name h1 {
    font-weight: 600;
}
.file-meta {
    display: flex;
    align-items: center;
    gap: 4px;
    height: 5px;
    padding-left: 1px;
    color: #c4c4c4;
}
.badge {
    padding: 1px 2px;
    border-radius: 2px;
    background: #24476e;
    color: #a9d2ff;
    line-height: 5px;
}
.side-tabs {
    display: flex;
    align-items: center;
    height: 19px;
    padding: 0 3px 0 4px;
    border-bottom: 1px solid var(--line);
}
.side-tabs .icon {
    margin-left: auto;
}
.tab {
    height: 11px;
    padding: 0 3px;
    border-radius: 2px;
    color: #b5b5b5;
}
.tab.on {
    background: var(--on);
    color: #fff;
    font-weight: 600;
}
.side-tabs .tab + .tab {
    margin-left: 4px;
}
.clip .pages-title {
    height: 18px;
}
.clip .page-list {
    padding: 1px 3px 4px 4px;
}
.clip .page-list a {
    padding-left: 3px;
}
.clip .layers {
    padding: 0 3px 0 5px;
}
.clip .layers h2 {
    height: 21px;
    padding: 0 0 2px 2px;
    font-weight: 500;
}
.clip .layer {
    gap: 2px;
}
.workspace {
    display: flex;
    flex-direction: column;
    min-width: 0;
}
.ruler-x {
    display: flex;
    height: 9px;
    overflow: hidden;
    color: var(--tick-color);
    font-size: var(--ruler-font);
    line-height: 8px;
}
.ruler-x span {
    flex: none;
    width: 24px;
    text-align: center;
}
.ruler-x .first {
    width: 20px;
}
.ruler-x .edge-start {
    width: 28px;
    padding-right: 2px;
    text-align: right;
}
.ruler-x .range {
    width: 48px;
}
.ruler-x .edge-end {
    padding-left: 2px;
    text-align: left;
}
.canvas {
    flex: 1;
    position: relative;
    background: #f8f8f8;
}
.shape {
    position: absolute;
    left: 72px;
    top: 141px;
    width: 48px;
    height: 44px;
    background: var(--red);
}
.cursor {
    position: absolute;
    fill: #000;
}
.canvas .cursor {
    left: 161px;
    top: 67px;
    width: 7px;
    height: 7px;
}
.dim-canvas .cursor {
    left: 52px;
    top: 11px;
    width: 22px;
    height: 22px;
}
.share-row {
    display: flex;
    align-items: center;
    gap: 2px;
    height: 22px;
    padding: 0 3px 0 5px;
}
.share-row .menu:first-child {
    margin-right: auto;
}
.share {
    width: 25px;
    height: 14px;
    border-radius: 2px;
    background: #1790e6;
    color: #fff;
    font-weight: 600;
}
.mode-tabs {
    display: flex;
    align-items: center;
    gap: 4px;
    height: 16px;
    padding: 0 4px 5px;
}
.zoom {
    display: flex;
    align-items: center;
    gap: 2px;
    margin-left: auto;
}
.selection {
    display: flex;
    align-items: center;
    gap: 2px;
    height: 22px;
    padding: 0 3px 2px 7px;
    border-top: 1px solid var(--line);
}
.selection h2 {
    flex: 1;
    font-size: 6px;
}
.toolbar {
    position: absolute;
    left: 106px;
    bottom: 6px;
    display: flex;
    align-items: center;
    width: 192px;
    height: 22px;
    padding: 0 3px;
    border-top: 1px solid #4c4c4c;
    border-radius: 4px;
    background: var(--bg);
    color: var(--text);
    box-shadow: 0 1px 3px rgba(0, 0, 0, 0.4);
}
.tool {
    flex: none;
    display: flex;
    align-items: center;
    justify-content: center;
    width: 15px;
    height: 15px;
    border-radius: 2px;
}
.tool.on {
    background: #1790e6;
    color: #fff;
}
.toolbar .icon.caret {
    width: 7px;
    height: 7px;
    margin: 0 2px;
}
.tool + .tool {
    margin-left: 4px;
}
.divider {
    align-self: stretch;
    width: 1px;
    margin-left: 4px;
    background: var(--line);
}
.dev-mode {
    display: flex;
    align-items: center;
    width: 24px;
    height: 12px;
    margin-left: auto;
    border-radius: 3px;
    background: var(--on);
    padding-left: 3px;
}
.help {
    position: absolute;
    right: 11px;
    bottom: 12px;
    width: 14px;
    height: 14px;
    border-radius: 50%;
    background: #1c1c1c;
    color: #fff;
    font-size: 8px;
    line-height: 14px;
}
```
